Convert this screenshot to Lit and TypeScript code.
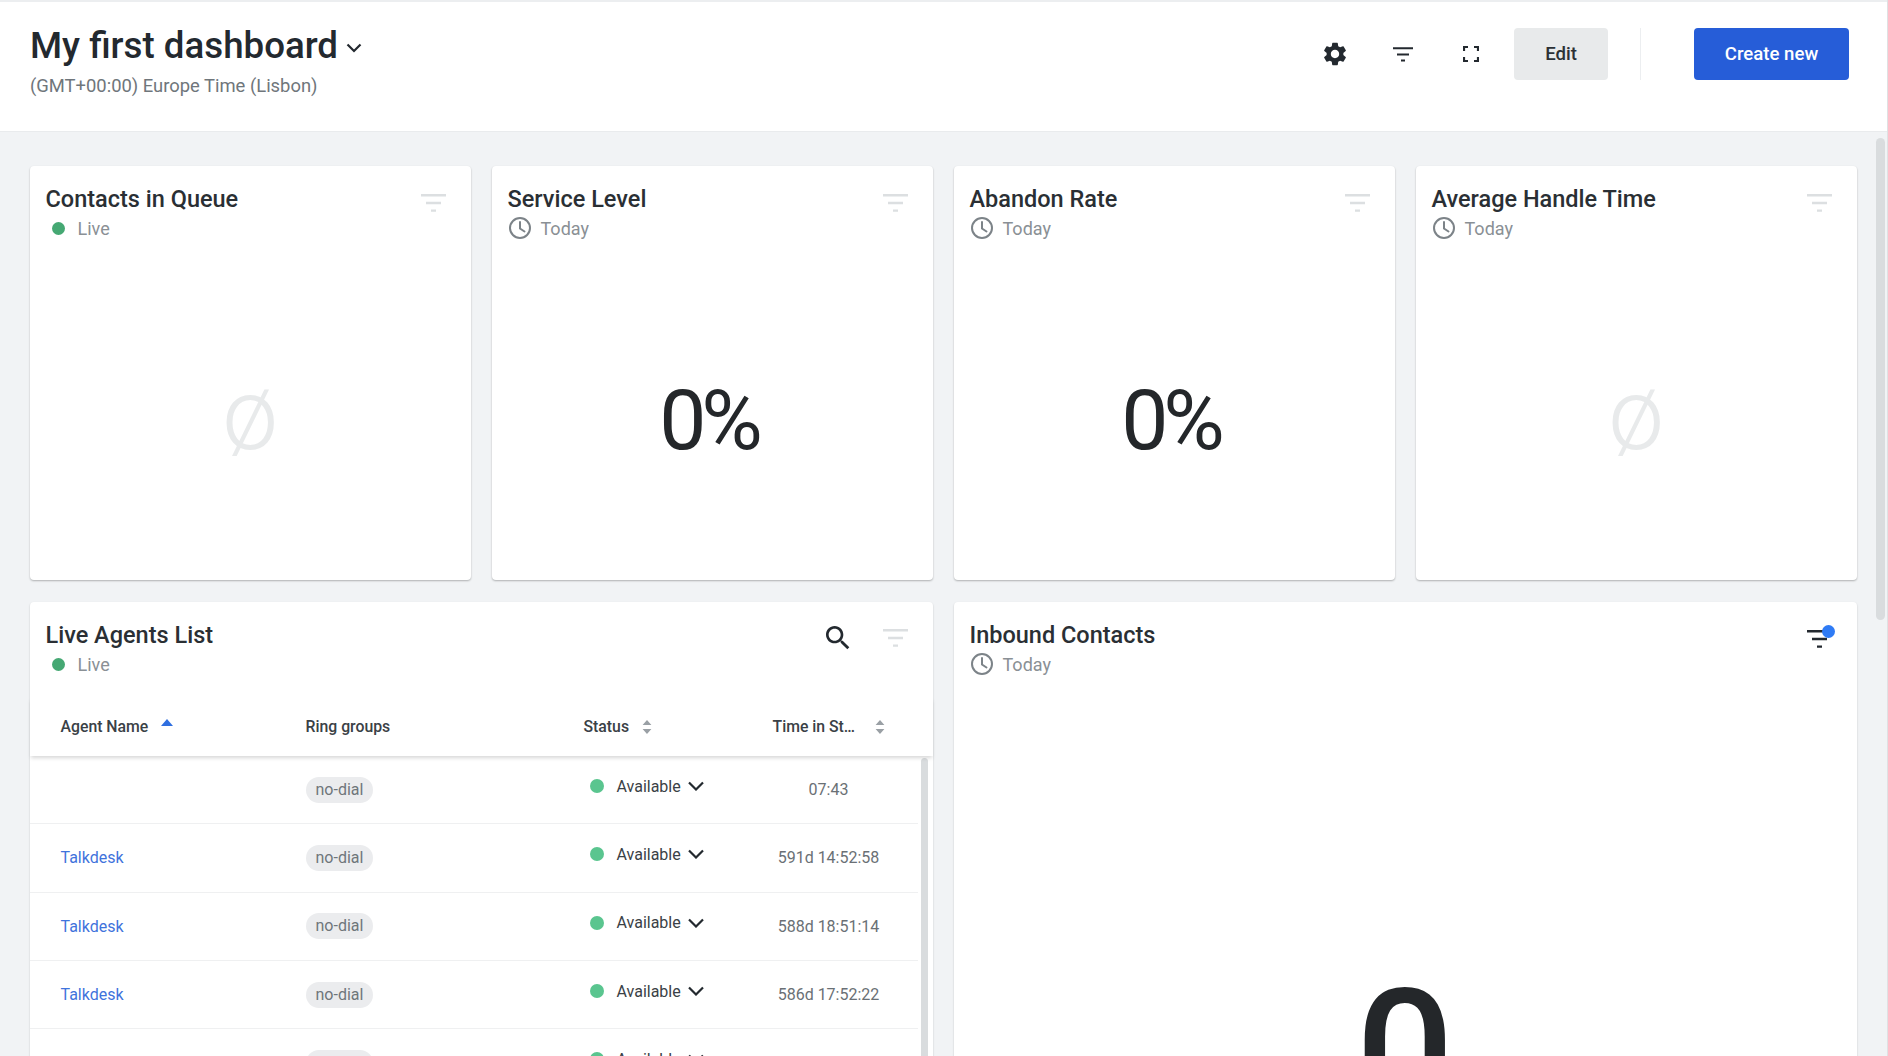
import { LitElement, html, css, svg } from 'lit';
import { customElement, property } from 'lit/decorators.js';

const filterLines = svg`<path d="M0 1.2h25M5 9h15M10 16.6h5" fill="none" stroke="currentColor" stroke-width="2.4"/>`;

const filterIcon = html`<svg class="filter" viewBox="0 0 25 18">${filterLines}</svg>`;

const clockIcon = html`<svg class="clock" viewBox="0 0 24 24" fill="none" stroke="currentColor" stroke-width="2">
  <circle cx="12" cy="12" r="10"></circle>
  <path d="M12 6v6.5l4.5 3" stroke-linecap="round"></path>
</svg>`;

const chevron = html`<svg class="chevron" viewBox="0 0 16 10" fill="none" stroke="currentColor" stroke-width="2.2">
  <path d="M1 1.5l7 7 7-7"></path>
</svg>`;

const sortBoth = html`<svg class="sort" viewBox="0 0 10 14" fill="#9aa0a5">
  <path d="M5 0l4.4 5H.6zM5 14L.6 9h8.8z"></path>
</svg>`;

@customElement('metric-card')
export class MetricCard extends LitElement {
  @property({ type: String }) label = '';
  @property({ type: String }) period = 'Today';
  @property({ type: String }) value = '';

  static styles = css`
    :host {
      display: block;
      height: 414px;
    }
    .card {
      height: 100%;
      box-sizing: border-box;
      display: flex;
      flex-direction: column;
      background: #fff;
      border-radius: 4px;
      box-shadow: 0 1px 2px rgba(0, 0, 0, 0.28);
      padding: 19px 25px 0 16px;
    }
    .head {
      display: flex;
      justify-content: space-between;
    }
    .title {
      font-size: 23.5px;
      line-height: 28px;
      font-weight: 500;
      color: #2a2f34;
    }
    .meta {
      display: flex;
      align-items: center;
      height: 26px;
      margin-top: 2px;
      font-size: 18px;
      color: #8a9095;
    }
    .dot {
      width: 13px;
      height: 13px;
      margin: 0 13px 0 6px;
      border-radius: 50%;
      background: #45a873;
    }
    .clock {
      width: 24px;
      height: 24px;
      margin-right: 9px;
      color: #7c8388;
    }
    .filter {
      width: 25px;
      height: 18px;
      margin-top: 9px;
      color: #dcdfe1;
    }
    .value {
      flex: 1;
      display: flex;
      align-items: center;
      justify-content: center;
      padding: 20px 0 0 0;
      margin-right: -2px;
      font-size: 84px;
      font-weight: 400;
      letter-spacing: -5px;
      color: #24272a;
    }
    .value.empty {
      padding-top: 7px;
      margin-right: -9px;
      font-size: 100px;
      font-weight: 300;
      letter-spacing: 0;
      color: #e8eaeb;
    }
  `;

  render() {
    const live = this.period === 'Live';
    return html`
      <div class="card">
        <div class="head">
          <div class="title">${this.label}</div>
          ${filterIcon}
        </div>
        <div class="meta">
          ${live ? html`<span class="dot"></span>` : clockIcon} ${this.period}
        </div>
        <div class="value ${this.value === 'ø' ? 'empty' : ''}">${this.value}</div>
      </div>
    `;
  }
}

@customElement('app-root')
export class AppRoot extends LitElement {
  private metrics = [
    { label: 'Contacts in Queue', period: 'Live', value: 'ø' },
    { label: 'Service Level', period: 'Today', value: '0%' },
    { label: 'Abandon Rate', period: 'Today', value: '0%' },
    { label: 'Average Handle Time', period: 'Today', value: 'ø' },
  ];

  // last row runs off the bottom of the page, only its pill and status show
  private agents = [
    { name: '', time: '07:43' },
    { name: 'Talkdesk', time: '591d 14:52:58' },
    { name: 'Talkdesk', time: '588d 18:51:14' },
    { name: 'Talkdesk', time: '586d 17:52:22' },
    { name: '', time: '' },
  ];

  static styles = css`
    :host {
      display: block;
      font-family: Roboto, 'Liberation Sans', sans-serif;
    }
    .page {
      position: relative;
      height: 1056px;
      overflow: hidden;
      display: flex;
      flex-direction: column;
      background: #f1f3f5;
      border-right: 1px solid #dfe1e3;
      box-sizing: border-box;
    }
    header {
      flex: none;
      height: 132px;
      box-sizing: border-box;
      display: flex;
      justify-content: space-between;
      padding: 0 38px 0 30px;
      background: #fff;
      border-top: 2px solid #eceef0;
      border-bottom: 1px solid #e9ebed;
    }
    .heading {
      padding-top: 21px;
    }
    .name {
      display: flex;
      align-items: center;
      gap: 8px;
      font-size: 36.7px;
      line-height: 46px;
      font-weight: 500;
      color: #23292f;
    }
    .name svg {
      width: 16px;
      height: 10px;
      margin-top: 4px;
    }
    .tz {
      margin-top: 5px;
      font-size: 18.4px;
      line-height: 24px;
      color: #6f767b;
    }
    .actions {
      display: flex;
      align-items: flex-start;
      padding-top: 26px;
    }
    .icon-btn {
      width: 68px;
      height: 52px;
      display: flex;
      align-items: center;
      justify-content: center;
      color: #23292f;
    }
    .icon-btn svg {
      display: block;
    }
    button {
      height: 52px;
      border: 0;
      border-radius: 4px;
      font: 500 18.6px Roboto, 'Liberation Sans', sans-serif;
    }
    .edit {
      width: 94px;
      margin-left: 9px;
      background: #e8eaeb;
      color: #2b3136;
    }
    .divider {
      width: 1px;
      height: 52px;
      margin: 0 53px 0 32px;
      background: #eceef0;
    }
    .create {
      width: 155px;
      background: #265dd8;
      color: #fff;
    }
    main {
      flex: 1;
      min-height: 0;
      display: grid;
      grid-template-columns: repeat(4, 441px);
      column-gap: 21px;
      row-gap: 22px;
      padding: 34px 0 0 29.5px;
      align-content: start;
    }
    .wide {
      grid-column: span 2;
      height: 600px;
      position: relative;
      background: #fff;
      border-radius: 4px;
      box-shadow: 0 1px 2px rgba(0, 0, 0, 0.2);
    }
    .wide-head {
      display: flex;
      justify-content: space-between;
      padding: 19px 25px 0 16px;
    }
    .title {
      font-size: 23.5px;
      line-height: 28px;
      font-weight: 500;
      color: #2a2f34;
    }
    .meta {
      display: flex;
      align-items: center;
      height: 26px;
      margin-top: 2px;
      font-size: 18px;
      color: #8a9095;
    }
    .live-dot {
      width: 13px;
      height: 13px;
      margin: 0 13px 0 6px;
      border-radius: 50%;
      background: #45a873;
    }
    .clock {
      width: 24px;
      height: 24px;
      margin-right: 9px;
      color: #7c8388;
    }
    .tools {
      display: flex;
      align-items: center;
      gap: 29px;
      height: 34px;
    }
    .tools .filter {
      width: 25px;
      height: 18px;
      color: #dcdfe1;
    }
    .search {
      width: 32px;
      height: 32px;
      color: #23292f;
      display: block;
    }
    .row {
      display: grid;
      grid-template-columns: 245px 278px 189px 112px;
      align-items: center;
      padding-left: 31px;
      font-size: 16px;
    }
    .thead {
      height: 59px;
      margin-top: 20px;
      position: relative;
      z-index: 1;
      font-size: 15.8px;
      font-weight: 500;
      color: #3a4146;
      box-shadow: 0 3px 4px -1px rgba(0, 0, 0, 0.16);
    }
    .th {
      display: flex;
      align-items: center;
      white-space: nowrap;
    }
    .caret {
      flex: none;
      width: 12px;
      height: 7px;
      margin: -8px 0 0 13px;
    }
    .sort {
      flex: none;
      width: 10px;
      height: 14px;
      margin-left: 13px;
    }
    .th.time-head .sort {
      margin-left: 20px;
    }
    .tbody {
      width: 888px;
      overflow: hidden;
    }
    .tbody .row {
      height: 68.3px;
      box-sizing: border-box;
      border-bottom: 1px solid #eff0f1;
    }
    .link {
      color: #3f73dc;
    }
    .pill {
      justify-self: start;
      height: 26px;
      padding: 0 10px;
      line-height: 26px;
      border-radius: 13px;
      background: #ebecee;
      color: #6f767b;
    }
    .status {
      display: flex;
      align-items: center;
      margin: -7px 0 0 6px;
      color: #3a4146;
    }
    .status-dot {
      flex: none;
      width: 14px;
      height: 14px;
      margin-right: 13px;
      border-radius: 50%;
      background: #5ac58f;
    }
    .chevron {
      flex: none;
      width: 16px;
      height: 10px;
      margin-left: 7px;
      color: #23292f;
    }
    .time {
      text-align: center;
      color: #6a7075;
      white-space: nowrap;
    }
    .track {
      position: absolute;
      left: 891px;
      top: 156px;
      width: 7px;
      bottom: 0;
      border-radius: 4px;
      background: #d9dcde;
    }
    .count {
      display: flex;
      justify-content: center;
      margin-top: 289px;
      font-size: 172px;
      line-height: 172px;
      font-weight: 500;
      color: #24272a;
    }
    .badge {
      position: relative;
      width: 25px;
      height: 18px;
      margin-top: 9px;
      color: #23292f;
    }
    .badge svg {
      width: 25px;
      height: 18px;
      display: block;
    }
    .badge i {
      position: absolute;
      right: -3px;
      top: -5px;
      width: 13px;
      height: 13px;
      border-radius: 50%;
      background: #2f7bf5;
    }
    .page-scroll {
      position: absolute;
      left: 1876px;
      top: 138px;
      width: 9px;
      height: 482px;
      border-radius: 5px;
      background: #d9dcde;
    }
  `;

  render() {
    return html`
      <div class="page">
        <header>
          <div class="heading">
            <div class="name">
              My first dashboard
              <svg viewBox="0 0 16 10" fill="none" stroke="currentColor" stroke-width="2.2"><path d="M1.5 1.5L8 8l6.5-6.5"></path></svg>
            </div>
            <div class="tz">(GMT+00:00) Europe Time (Lisbon)</div>
          </div>
          <div class="actions">
            <div class="icon-btn">
              <svg width="28" height="28" viewBox="0 0 24 24" fill="currentColor">
                <path d="M19.14 12.94c.04-.3.06-.61.06-.94 0-.32-.02-.64-.07-.94l2.03-1.58c.18-.14.23-.41.12-.61l-1.92-3.32c-.12-.22-.37-.29-.59-.22l-2.39.96c-.5-.38-1.03-.7-1.62-.94l-.36-2.54c-.04-.24-.24-.41-.48-.41h-3.84c-.24 0-.43.17-.47.41l-.36 2.54c-.59.24-1.13.57-1.62.94l-2.39-.96c-.22-.08-.47 0-.59.22L2.74 8.87c-.12.21-.08.47.12.61l2.03 1.58c-.05.3-.09.63-.09.94s.02.64.07.94l-2.03 1.58c-.18.14-.23.41-.12.61l1.92 3.32c.12.22.37.29.59.22l2.39-.96c.5.38 1.03.7 1.62.94l.36 2.54c.05.24.24.41.48.41h3.84c.24 0 .44-.17.47-.41l.36-2.54c.59-.24 1.13-.56 1.62-.94l2.39.96c.22.08.47 0 .59-.22l1.92-3.32c.12-.22.07-.47-.12-.61l-2.01-1.58zM12 15.6c-1.98 0-3.6-1.62-3.6-3.6s1.62-3.6 3.6-3.6 3.6 1.62 3.6 3.6-1.62 3.6-3.6 3.6z"></path>
              </svg>
            </div>
            <div class="icon-btn">
              <svg width="20" height="15" viewBox="0 0 25 18">${filterLines}</svg>
            </div>
            <div class="icon-btn">
              <svg width="16" height="16" viewBox="0 0 16 16" fill="none" stroke="currentColor" stroke-width="2.2">
                <path d="M1 5V1h4M11 1h4v4M15 11v4h-4M5 15H1v-4"></path>
              </svg>
            </div>
            <button class="edit">Edit</button>
            <div class="divider"></div>
            <button class="create">Create new</button>
          </div>
        </header>
        <main>
          ${this.metrics.map(
            (m) => html`<metric-card .label=${m.label} .period=${m.period} .value=${m.value}></metric-card>`
          )}
          <section class="wide">
            <div class="wide-head">
              <div>
                <div class="title">Live Agents List</div>
                <div class="meta"><span class="live-dot"></span>Live</div>
              </div>
              <div class="tools">
                <svg class="search" viewBox="0 0 24 24" fill="currentColor">
                  <path d="M15.5 14h-.79l-.28-.27C15.41 12.59 16 11.11 16 9.5 16 5.91 13.09 3 9.5 3S3 5.91 3 9.5 5.91 16 9.5 16c1.61 0 3.09-.59 4.23-1.57l.27.28v.79l5 4.99L20.49 19l-4.99-5zm-6 0C7.01 14 5 11.99 5 9.5S7.01 5 9.5 5 14 7.01 14 9.5 11.99 14 9.5 14z"></path>
                </svg>
                ${filterIcon}
              </div>
            </div>
            <div class="row thead">
              <div class="th">
                Agent Name
                <svg class="caret" viewBox="0 0 12 7" fill="#2f6fe0"><path d="M6 0l6 7H0z"></path></svg>
              </div>
              <div class="th">Ring groups</div>
              <div class="th">Status ${sortBoth}</div>
              <div class="th time-head">Time in St… ${sortBoth}</div>
            </div>
            <div class="tbody">
              ${this.agents.map(
                (a) => html`
                  <div class="row">
                    <div class="link">${a.name}</div>
                    <div class="pill">no-dial</div>
                    <div class="status"><span class="status-dot"></span>Available ${chevron}</div>
                    <div class="time">${a.time}</div>
                  </div>
                `
              )}
            </div>
            <div class="track"></div>
          </section>
          <section class="wide">
            <div class="wide-head">
              <div>
                <div class="title">Inbound Contacts</div>
                <div class="meta">${clockIcon}Today</div>
              </div>
              <div class="badge">
                <svg viewBox="0 0 25 18">${filterLines}</svg>
                <i></i>
              </div>
            </div>
            <div class="count">0</div>
          </section>
        </main>
        <div class="page-scroll"></div>
      </div>
    `;
  }
}
